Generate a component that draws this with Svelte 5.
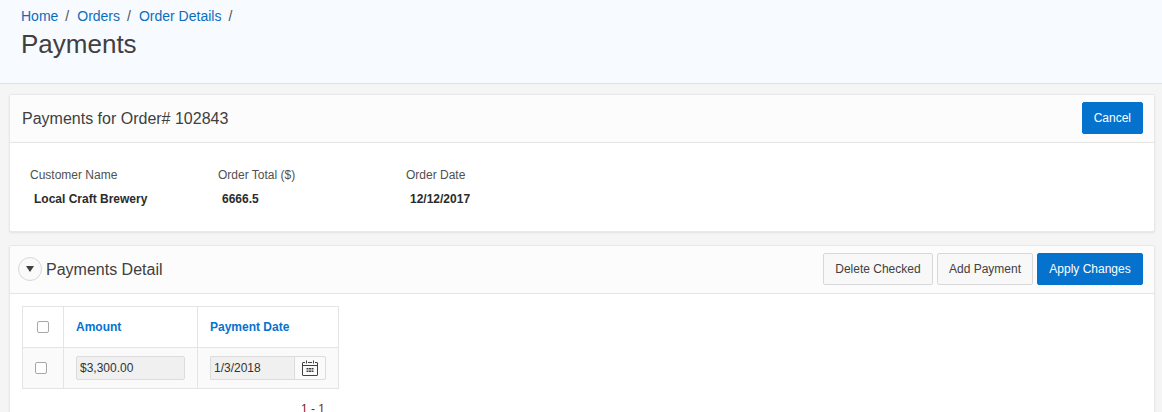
<script lang="ts">
	const crumbs = ['Home', 'Orders', 'Order Details'];
	const summary = [
		{ label: 'Customer Name', value: 'Local Craft Brewery' },
		{ label: 'Order Total ($)', value: '6666.5' },
		{ label: 'Order Date', value: '12/12/2017' }
	];
</script>

<div class="page">
	<header class="hero">
		<nav class="crumbs">
			{#each crumbs as crumb}
				<a href="#top">{crumb}</a>
				<span class="sep">/</span>
			{/each}
		</nav>
		<h1>Payments</h1>
	</header>

	<main class="content">
		<section class="card">
			<div class="card-head">
				<h2>Payments for Order# 102843</h2>
				<button type="button" class="btn hot">Cancel</button>
			</div>
			<div class="summary">
				{#each summary as item}
					<div class="field">
						<span class="label">{item.label}</span>
						<strong class="value">{item.value}</strong>
					</div>
				{/each}
			</div>
		</section>

		<section class="card detail">
			<div class="card-head">
				<div class="title-group">
					<button type="button" class="collapse" aria-label="Collapse">
						<svg width="8" height="6" viewBox="0 0 8 6"><path d="M0 0h8L4 6z" fill="#404040" /></svg>
					</button>
					<h2>Payments Detail</h2>
				</div>
				<div class="actions">
					<button type="button" class="btn delete">Delete Checked</button>
					<button type="button" class="btn">Add Payment</button>
					<button type="button" class="btn hot apply">Apply Changes</button>
				</div>
			</div>
			<div class="grid-wrap">
				<table>
					<thead>
						<tr>
							<th class="check"><input type="checkbox" /></th>
							<th class="amount">Amount</th>
							<th class="date">Payment Date</th>
						</tr>
					</thead>
					<tbody>
						<tr>
							<td class="check row-check"><input type="checkbox" /></td>
							<td><input class="text amount-input" type="text" value="$3,300.00" readonly /></td>
							<td>
								<div class="date-field">
									<input class="text date-input" type="text" value="1/3/2018" readonly />
									<button type="button" class="cal" aria-label="Pick date">
										<svg width="16" height="16" viewBox="0 0 16 16" fill="none">
											<path d="M4.5 0.5v3M11.5 0.5v3" stroke="#404040" />
											<path d="M3 2.5H1a.5.5 0 0 0-.5.5v12a.5.5 0 0 0 .5.5h14a.5.5 0 0 0 .5-.5V3a.5.5 0 0 0-.5-.5h-2M6 2.5h4M.5 5.5h15" stroke="#404040" />
											<path d="M4.5 8h2v1.5h-2zM7 8h2v1.5H7zM9.5 8h2v1.5h-2zM4.5 10.5h2V12h-2zM7 10.5h2V12H7zM9.5 10.5h2V12h-2z" fill="#404040" />
										</svg>
									</button>
								</div>
							</td>
						</tr>
					</tbody>
				</table>
				<div class="pager">1 - 1</div>
			</div>
		</section>
	</main>
</div>

<style>
	:global(body) {
		margin: 0;
		overflow: hidden;
		background: #f5f5f5;
	}

	.page {
		height: 412px;
		overflow: hidden;
		font-family: "Liberation Sans", Arial, sans-serif;
		font-size: 12px;
		color: #404040;
	}

	.hero {
		box-sizing: border-box;
		height: 84px;
		padding: 8px 21px 0;
		background: #f7faff;
		border-bottom: 1px solid #dde1e6;
	}

	.crumbs {
		display: flex;
		gap: 7px;
		font-size: 14px;
		line-height: 17px;
	}

	.crumbs a {
		color: #0a6ebd;
		text-decoration: none;
	}

	.crumbs .sep {
		color: #505050;
		margin-right: 1px;
	}

	h1 {
		margin: 3px 0 0;
		font-size: 26px;
		font-weight: 400;
		line-height: 32px;
		color: #404040;
	}

	.content {
		padding: 10px 7px 0 9px;
		display: flex;
		flex-direction: column;
		gap: 13px;
	}

	.card {
		background: #fff;
		border: 1px solid #e8e8e8;
		border-radius: 2px;
		box-shadow: 0 1px 2px rgba(0, 0, 0, 0.08);
	}

	.card-head {
		box-sizing: border-box;
		height: 48px;
		display: flex;
		align-items: center;
		justify-content: space-between;
		padding: 0 11px 1px 12px;
		background: #fcfcfc;
		border-bottom: 1px solid #e4e4e4;
	}

	h2 {
		margin: 2px 0 0;
		font-size: 16px;
		font-weight: 400;
		color: #404040;
	}

	.btn {
		height: 32px;
		padding: 0 11px;
		font-family: inherit;
		font-size: 12px;
		color: #404040;
		background: #f8f8f8;
		border: 1px solid #d8d8d8;
		border-radius: 2px;
	}

	.btn.hot {
		color: #fff;
		background: #0572ce;
		border-color: #0572ce;
	}

	.btn.delete {
		width: 110px;
		padding: 0;
	}

	.btn.apply {
		width: 106px;
		padding: 0;
	}

	.summary {
		display: flex;
		height: 88px;
		box-sizing: border-box;
		padding: 25px 0 0 20px;
	}

	.field {
		width: 188px;
		display: flex;
		flex-direction: column;
		gap: 10px;
	}

	.label {
		color: #505050;
		line-height: 14px;
	}

	.value {
		padding-left: 4px;
		line-height: 14px;
		color: #2b2b2b;
	}

	.title-group {
		display: flex;
		align-items: center;
		gap: 4px;
		margin-left: -4px;
	}

	.collapse {
		box-sizing: border-box;
		width: 24px;
		height: 24px;
		display: flex;
		align-items: center;
		justify-content: center;
		padding: 0;
		background: #fafafa;
		border: 1px solid #d8d8d8;
		border-radius: 50%;
	}

	.actions {
		display: flex;
		gap: 4px;
	}

	.grid-wrap {
		width: 316px;
		padding: 12px 0 0 12px;
	}

	table {
		width: 316px;
		border-collapse: collapse;
		table-layout: fixed;
		background: #fff;
	}

	th,
	td {
		box-sizing: border-box;
		height: 41px;
		padding: 0 12px;
		border: 1px solid #e4e4e4;
		text-align: left;
		vertical-align: middle;
	}

	th {
		font-size: 12px;
		font-weight: 700;
		color: #0572ce;
	}

	tbody td {
		background: #fafafa;
	}

	.check {
		width: 41px;
		padding: 0;
		text-align: center;
	}

	.amount {
		width: 134px;
	}

	.date {
		width: 141px;
	}

	input[type="checkbox"] {
		appearance: none;
		box-sizing: border-box;
		display: block;
		width: 12px;
		height: 12px;
		margin: 0 auto;
		background: #fff;
		border: 1px solid #a8a8a8;
		border-radius: 2px;
	}

	.row-check input {
		transform: translateX(-2px);
	}

	.text {
		box-sizing: border-box;
		height: 24px;
		padding: 0 3px;
		font-family: inherit;
		font-size: 12px;
		color: #333;
		background: #f0f0f0;
		border: 1px solid #dcdcdc;
		border-radius: 2px;
		outline: none;
	}

	.amount-input {
		display: block;
		width: 109px;
	}

	.date-field {
		display: flex;
		width: 116px;
	}

	.date-input {
		width: 84px;
		border-right: 0;
		border-radius: 2px 0 0 2px;
	}

	.cal {
		box-sizing: border-box;
		width: 32px;
		height: 24px;
		display: flex;
		align-items: center;
		justify-content: center;
		padding: 0;
		background: #fafafa;
		border: 1px solid #dcdcdc;
		border-radius: 0 2px 2px 0;
	}

	.pager {
		padding: 13px 13px 0 0;
		text-align: right;
		line-height: 14px;
		color: #7a2222;
	}
</style>
